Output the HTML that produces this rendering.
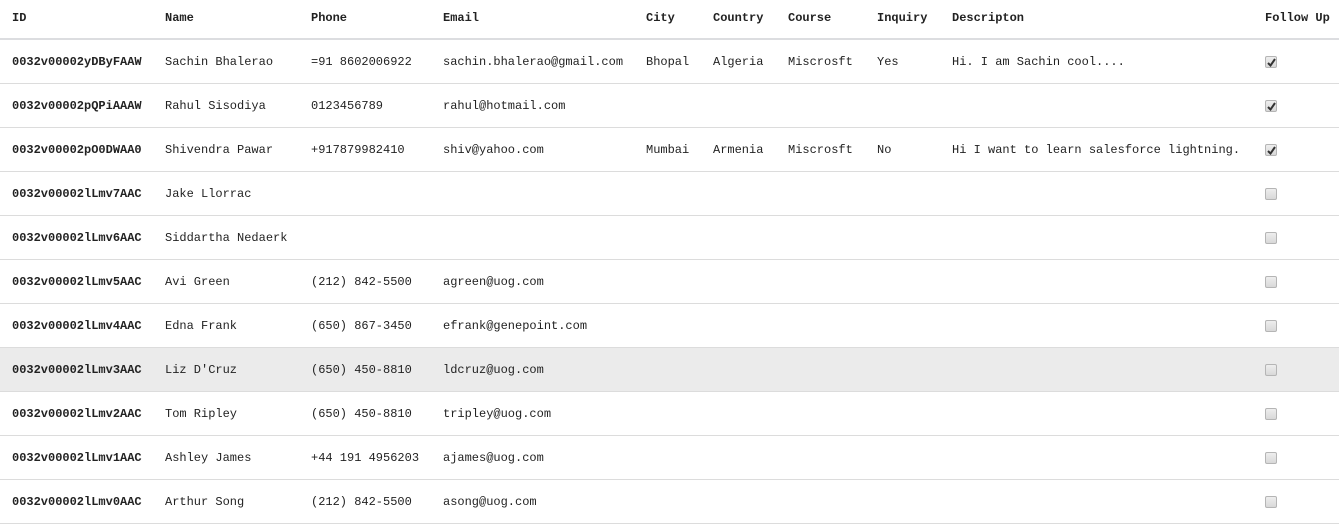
<!DOCTYPE html><html><head><style>
body{margin:0;width:1339px;height:526px;overflow:hidden;background:#fff;font-family:"Liberation Mono",monospace;font-size:12px;color:#222;position:relative}
.r{position:absolute;left:0;width:1339px;height:44px;border-bottom:1px solid #dcdcdc;box-sizing:border-box}
.h{top:0;height:40px;border-bottom:2px solid #dcdde0;font-weight:bold}
.c{position:absolute;top:1px;line-height:42px;white-space:pre}
.h .c{line-height:34px}
.id{font-weight:bold}
.cb{position:absolute;left:1265px;top:16px;width:10px;height:10px;border:1px solid #b5b5b5;border-radius:2px;background:linear-gradient(#eee,#d8d8d8)}
.cb svg{position:absolute;left:1px;top:1px}
</style></head><body>
<div class="r h"><span class="c" style="left:12px">ID</span><span class="c" style="left:165px">Name</span><span class="c" style="left:311px">Phone</span><span class="c" style="left:443px">Email</span><span class="c" style="left:646px">City</span><span class="c" style="left:713px">Country</span><span class="c" style="left:788px">Course</span><span class="c" style="left:877px">Inquiry</span><span class="c" style="left:952px">Descripton</span><span class="c" style="left:1265px">Follow Up</span></div>

<div class="r" style="top:40px"><span class="c id" style="left:12px">0032v00002yDByFAAW</span><span class="c" style="left:165px">Sachin Bhalerao</span><span class="c" style="left:311px">=91 8602006922</span><span class="c" style="left:443px">sachin.bhalerao@gmail.com</span><span class="c" style="left:646px">Bhopal</span><span class="c" style="left:713px">Algeria</span><span class="c" style="left:788px">Miscrosft</span><span class="c" style="left:877px">Yes</span><span class="c" style="left:952px">Hi. I am Sachin cool....</span><span class="cb"><svg width="9" height="9"><path d="M1 5 L3.5 7.5 L8 1" stroke="#333" stroke-width="2" fill="none"/></svg></span></div>

<div class="r" style="top:84px"><span class="c id" style="left:12px">0032v00002pQPiAAAW</span><span class="c" style="left:165px">Rahul Sisodiya</span><span class="c" style="left:311px">0123456789</span><span class="c" style="left:443px">rahul@hotmail.com</span><span class="cb"><svg width="9" height="9"><path d="M1 5 L3.5 7.5 L8 1" stroke="#333" stroke-width="2" fill="none"/></svg></span></div>

<div class="r" style="top:128px"><span class="c id" style="left:12px">0032v00002pO0DWAA0</span><span class="c" style="left:165px">Shivendra Pawar</span><span class="c" style="left:311px">+917879982410</span><span class="c" style="left:443px">shiv@yahoo.com</span><span class="c" style="left:646px">Mumbai</span><span class="c" style="left:713px">Armenia</span><span class="c" style="left:788px">Miscrosft</span><span class="c" style="left:877px">No</span><span class="c" style="left:952px">Hi I want to learn salesforce lightning.</span><span class="cb"><svg width="9" height="9"><path d="M1 5 L3.5 7.5 L8 1" stroke="#333" stroke-width="2" fill="none"/></svg></span></div>

<div class="r" style="top:172px"><span class="c id" style="left:12px">0032v00002lLmv7AAC</span><span class="c" style="left:165px">Jake Llorrac</span><span class="cb"></span></div>
<div class="r" style="top:216px"><span class="c id" style="left:12px">0032v00002lLmv6AAC</span><span class="c" style="left:165px">Siddartha Nedaerk</span><span class="cb"></span></div>
<div class="r" style="top:260px"><span class="c id" style="left:12px">0032v00002lLmv5AAC</span><span class="c" style="left:165px">Avi Green</span><span class="c" style="left:311px">(212) 842-5500</span><span class="c" style="left:443px">agreen@uog.com</span><span class="cb"></span></div>
<div class="r" style="top:304px"><span class="c id" style="left:12px">0032v00002lLmv4AAC</span><span class="c" style="left:165px">Edna Frank</span><span class="c" style="left:311px">(650) 867-3450</span><span class="c" style="left:443px">efrank@genepoint.com</span><span class="cb"></span></div>
<div class="r" style="top:348px;background:#ebebeb"><span class="c id" style="left:12px">0032v00002lLmv3AAC</span><span class="c" style="left:165px">Liz D'Cruz</span><span class="c" style="left:311px">(650) 450-8810</span><span class="c" style="left:443px">ldcruz@uog.com</span><span class="cb"></span></div>
<div class="r" style="top:392px"><span class="c id" style="left:12px">0032v00002lLmv2AAC</span><span class="c" style="left:165px">Tom Ripley</span><span class="c" style="left:311px">(650) 450-8810</span><span class="c" style="left:443px">tripley@uog.com</span><span class="cb"></span></div>
<div class="r" style="top:436px"><span class="c id" style="left:12px">0032v00002lLmv1AAC</span><span class="c" style="left:165px">Ashley James</span><span class="c" style="left:311px">+44 191 4956203</span><span class="c" style="left:443px">ajames@uog.com</span><span class="cb"></span></div>
<div class="r" style="top:480px"><span class="c id" style="left:12px">0032v00002lLmv0AAC</span><span class="c" style="left:165px">Arthur Song</span><span class="c" style="left:311px">(212) 842-5500</span><span class="c" style="left:443px">asong@uog.com</span><span class="cb"></span></div>
</body></html>
